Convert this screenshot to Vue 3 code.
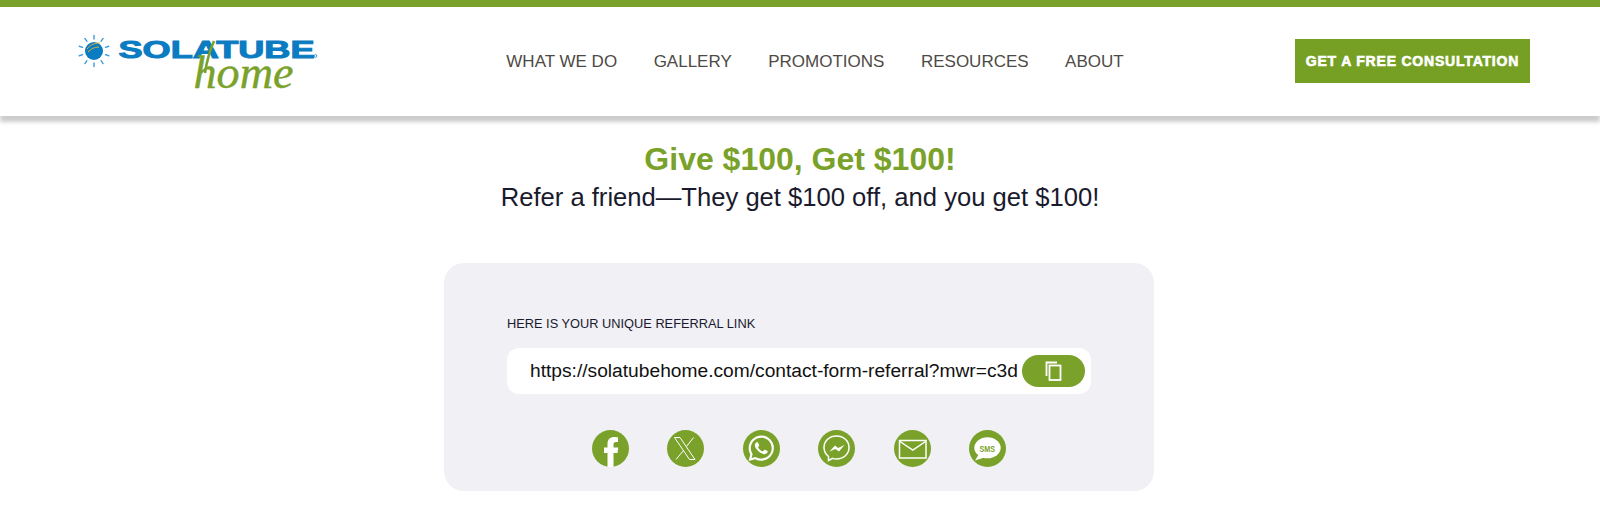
<template>
  <div class="page">
    <header class="site-header">
      <a class="logo" href="#" aria-label="Solatube home">
        <svg width="257" height="72" viewBox="0 0 257 72">
          <circle cx="16" cy="21" r="9" fill="#0b7cc2" />
          <path d="M9 19c3-4 7-6 13-6M10 22c3-3 6-5 11-5" stroke="#d9b23a" stroke-width="1" fill="none" />
          <g stroke="#3d9ad6" stroke-width="1.4" stroke-linecap="round">
            <line v-for="ray in rays" :key="ray.id" :x1="ray.x1" :y1="ray.y1" :x2="ray.x2" :y2="ray.y2" />
          </g>
          <text class="logo-word" x="40.500" y="28" textLength="196" lengthAdjust="spacingAndGlyphs">SOLATUBE</text>
          <circle cx="237.500" cy="26" r="1.400" fill="none" stroke="#0b7cc2" stroke-width=".7" />
          <path d="M127 43C129 30 132 20 136 11" stroke="#7aa22b" stroke-width="2.600" fill="none" />
          <text class="logo-script" x="115.500" y="58" textLength="100" lengthAdjust="spacingAndGlyphs">home</text>
        </svg>
      </a>
      <nav class="nav">
        <a v-for="item in navItems" :key="item" href="#">{{ item }}</a>
      </nav>
      <a class="cta" href="#">GET A FREE CONSULTATION</a>
    </header>

    <main class="content">
      <h1>Give $100, Get $100!</h1>
      <p class="sub">Refer a friend—They get $100 off, and you get $100!</p>

      <section class="card">
        <label class="link-label">HERE IS YOUR UNIQUE REFERRAL LINK</label>
        <div class="link-box">
          <span class="link-text">https://solatubehome.com/contact-form-referral?mwr=c3d</span>
          <button class="copy" type="button" aria-label="Copy link">
            <svg width="20" height="20" viewBox="0 0 20 20" fill="none" stroke="#fff" stroke-width="1.800">
              <path d="M2.500 15V1.500H13" />
              <rect x="5.500" y="4.500" width="11" height="14.500" />
            </svg>
          </button>
        </div>
        <div class="share">
          <a href="#" aria-label="Facebook">
            <svg viewBox="0 0 37 37">
              <circle cx="18.500" cy="18.500" r="18.500" fill="#7aa22b" />
              <path fill="#fff" d="M15.500 37V23H12v-5.500h3.500v-3.700C15.500 9.500 18 7 22.500 7c1.800 0 3.500.3 3.500.3v4.700h-2c-2 0-2.500 1-2.500 2.500v3h4.800l-.8 5.500h-4V37z" />
            </svg>
          </a>
          <a href="#" aria-label="X">
            <svg viewBox="0 0 37 37">
              <circle cx="18.500" cy="18.500" r="18.500" fill="#7aa22b" />
              <path fill="none" stroke="#fff" stroke-width="1" d="M7.500 7.500h5.500l15 22h-5.500zM26.500 7.500l-7 9M16.500 20.500l-7.500 9" />
            </svg>
          </a>
          <a href="#" aria-label="WhatsApp">
            <svg viewBox="0 0 37 37">
              <circle cx="18.500" cy="18.500" r="18.500" fill="#7aa22b" />
              <path fill="#fff" transform="translate(5.500 5.500) scale(1.060)" d="M17.472 14.382c-.297-.149-1.758-.867-2.030-.967-.273-.099-.471-.148-.670.150-.197.297-.767.966-.940 1.164-.173.199-.347.223-.644.075-.297-.150-1.255-.463-2.390-1.475-.883-.788-1.480-1.761-1.653-2.059-.173-.297-.018-.458.130-.606.134-.133.298-.347.446-.520.149-.174.198-.298.298-.497.099-.198.050-.371-.025-.520-.075-.149-.669-1.612-.916-2.207-.242-.579-.487-.500-.669-.510-.173-.008-.371-.010-.570-.010-.198 0-.520.074-.792.372-.272.297-1.040 1.016-1.040 2.479 0 1.462 1.065 2.875 1.213 3.074.149.198 2.096 3.200 5.077 4.487.709.306 1.262.489 1.694.625.712.227 1.360.195 1.871.118.571-.085 1.758-.719 2.006-1.413.248-.694.248-1.289.173-1.413-.074-.124-.272-.198-.570-.347m-5.421 7.403h-.004a9.870 9.870 0 01-5.031-1.378l-.361-.214-3.741.982.998-3.648-.235-.374a9.860 9.860 0 01-1.510-5.260c.001-5.450 4.436-9.884 9.888-9.884 2.640 0 5.122 1.030 6.988 2.898a9.825 9.825 0 012.893 6.994c-.003 5.450-4.437 9.884-9.885 9.884m8.413-18.297A11.815 11.815 0 0012.050 0C5.495 0 .160 5.335.157 11.892c0 2.096.547 4.142 1.588 5.945L.057 24l6.305-1.654a11.882 11.882 0 005.683 1.448h.005c6.554 0 11.890-5.335 11.893-11.893a11.821 11.821 0 00-3.480-8.413z" />
            </svg>
          </a>
          <a href="#" aria-label="Messenger">
            <svg viewBox="0 0 37 37">
              <circle cx="18.500" cy="18.500" r="18.500" fill="#7aa22b" />
              <path fill="none" stroke="#fff" stroke-width="1.500" d="M10.500 26.500C7.500 24 6 21 6 17.500 6 10.800 11.500 6 18.500 6S31 10.800 31 17.500 25.500 29 18.500 29c-1.400 0-2.600-.2-3.800-.6L10.500 30.500z" />
              <path fill="#fff" d="M11.500 21.500L17 15.500l3 2.500 6.500-3-5.500 6.500-3.500-2.500z" />
            </svg>
          </a>
          <a href="#" aria-label="Email">
            <svg viewBox="0 0 37 37">
              <circle cx="18.500" cy="18.500" r="18.500" fill="#7aa22b" />
              <rect x="5.500" y="10.500" width="26.500" height="17.500" fill="none" stroke="#fff" stroke-width="1.500" />
              <path d="M6 11.500L18.800 20l12.700-8.500" fill="none" stroke="#fff" stroke-width="1.500" />
            </svg>
          </a>
          <a href="#" aria-label="SMS">
            <svg viewBox="0 0 37 37">
              <circle cx="18.500" cy="18.500" r="18.500" fill="#7aa22b" />
              <ellipse cx="18.500" cy="17.800" rx="13.200" ry="10.500" fill="#fff" />
              <path d="M10 24l-4 6.500 9.500-3z" fill="#fff" />
              <text class="sms-text" x="10.500" y="21.500" textLength="15.500" lengthAdjust="spacingAndGlyphs">SMS</text>
            </svg>
          </a>
        </div>
      </section>
    </main>
  </div>
</template>

<script setup>
const navItems = ["WHAT WE DO", "GALLERY", "PROMOTIONS", "RESOURCES", "ABOUT"];

// sun rays round the logo circle
const rays = Array.from({ length: 10 }, (_, i) => {
  const a = (i * Math.PI) / 5 + Math.PI / 10;
  return {
    id: i,
    x1: 16 + Math.cos(a) * 12,
    y1: 21 + Math.sin(a) * 12,
    x2: 16 + Math.cos(a) * 15.5,
    y2: 21 + Math.sin(a) * 15.5,
  };
});
</script>

<style>
html,
body {
  margin: 0;
  background: #fff;
}
</style>

<style scoped>
.page {
  font-family: "Liberation Sans", Arial, sans-serif;
  color: #1a1a2e;
}

.site-header {
  display: flex;
  align-items: center;
  justify-content: space-between;
  box-sizing: border-box;
  height: 116px;
  padding: 0 70px 0 78px;
  border-top: 7px solid #7aa22b;
  background: #fff;
  box-shadow: 0 6px 4px rgba(0, 0, 0, 0.2);
}

.logo {
  display: block;
  width: 257px;
  height: 72px;
  margin-top: 8px;
}

.logo-word {
  font-family: "Liberation Sans", Arial, sans-serif;
  font-size: 24px;
  font-weight: 700;
  fill: #0b7cc2;
  stroke: #0b7cc2;
  stroke-width: 1px;
}

.logo-script {
  font-family: "Liberation Serif", "Times New Roman", serif;
  font-size: 46px;
  font-style: italic;
  fill: #7aa22b;
  stroke: #7aa22b;
  stroke-width: 0.4px;
}

.nav {
  display: flex;
  gap: 36.5px;
}

.nav a {
  color: #4d4a45;
  font-size: 17px;
  text-decoration: none;
}

.cta {
  display: flex;
  align-items: center;
  justify-content: center;
  width: 235px;
  height: 44px;
  margin-top: -1px;
  background: #76a024;
  color: #fff;
  font-size: 14px;
  font-weight: 700;
  letter-spacing: 0.8px;
  -webkit-text-stroke: 0.6px #fff;
  text-decoration: none;
}

.content {
  display: flex;
  flex-direction: column;
  align-items: center;
}

h1 {
  margin: 24px 0 0;
  color: #7aa22b;
  font-size: 32px;
  font-weight: 700;
  line-height: 39px;
}

.sub {
  margin: 4px 0 0;
  font-size: 25.6px;
  line-height: 28px;
}

.card {
  box-sizing: border-box;
  width: 710px;
  height: 228px;
  margin: 52px 2px 15px 0;
  padding: 53px 63px 0;
  border-radius: 20px;
  background: #f0f0f5;
}

.link-label {
  display: block;
  font-size: 12.8px;
  line-height: 16px;
}

.link-box {
  display: flex;
  align-items: center;
  justify-content: space-between;
  box-sizing: border-box;
  height: 46px;
  margin-top: 16px;
  padding: 0 6px 0 23px;
  border-radius: 12px;
  background: #fff;
}

.link-text {
  overflow: hidden;
  color: #111;
  font-size: 19.2px;
  line-height: 24px;
  white-space: nowrap;
}

.copy {
  display: flex;
  align-items: center;
  justify-content: center;
  flex: none;
  width: 63px;
  height: 32px;
  padding: 0;
  border: 0;
  border-radius: 16px;
  background: #7aa22b;
}

.share {
  display: flex;
  justify-content: center;
  gap: 38.6px;
  margin-top: 36px;
}

.share a {
  display: block;
  width: 37px;
  height: 37px;
}

.share svg {
  display: block;
  width: 37px;
  height: 37px;
}

.sms-text {
  font-family: "Liberation Sans", Arial, sans-serif;
  font-size: 9px;
  font-weight: 700;
  fill: #7aa22b;
}
</style>
